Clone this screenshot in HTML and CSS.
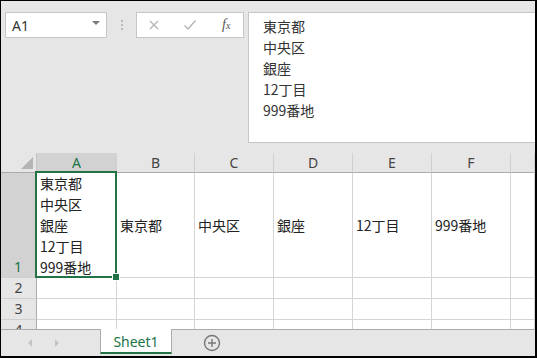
FILE: index.html
```html
<!DOCTYPE html>
<html lang="ja">
<head>
    <meta charset="UTF-8">
    <title>Sheet1</title>
    <link rel="stylesheet" href="styles.css">
</head>
<body>
    <div class="window">
        <div class="formula-bar">
            <div class="name-box">
                <span>A1</span>
                <span class="caret"></span>
            </div>
            <div class="grip"><i></i><i></i><i></i></div>
            <div class="fx-box">
                <svg class="fx-btn" width="12" height="12" viewBox="0 0 12 12">
                    <path d="M2 2 L10 10 M10 2 L2 10" stroke="#b4b4b4" stroke-width="1.3" fill="none"/>
                </svg>
                <svg class="fx-btn" width="14" height="12" viewBox="0 0 14 12">
                    <path d="M1.5 6.5 L5 10 L12.5 1.5" stroke="#b4b4b4" stroke-width="1.4" fill="none"/>
                </svg>
                <span class="fx-label"><i>f</i><span>x</span></span>
            </div>
            <div class="formula-input">
                東京都<br>中央区<br>銀座<br>12丁目<br>999番地
            </div>
        </div>

        <div class="sheet">
            <div class="corner"></div>
            <div class="col-head active">A</div>
            <div class="col-head">B</div>
            <div class="col-head">C</div>
            <div class="col-head">D</div>
            <div class="col-head">E</div>
            <div class="col-head">F</div>
            <div class="col-head"></div>

            <div class="row-head active tall">1</div>
            <div class="cell wrap selected">東京都<br>中央区<br>銀座<br>12丁目<br>999番地</div>
            <div class="cell middle">東京都</div>
            <div class="cell middle">中央区</div>
            <div class="cell middle">銀座</div>
            <div class="cell middle">12丁目</div>
            <div class="cell middle">999番地</div>
            <div class="cell"></div>

            <div class="row-head">2</div>
            <div class="cell"></div><div class="cell"></div><div class="cell"></div><div class="cell"></div>
            <div class="cell"></div><div class="cell"></div><div class="cell"></div>

            <div class="row-head">3</div>
            <div class="cell"></div><div class="cell"></div><div class="cell"></div><div class="cell"></div>
            <div class="cell"></div><div class="cell"></div><div class="cell"></div>

            <div class="row-head">4</div>
            <div class="cell"></div><div class="cell"></div><div class="cell"></div><div class="cell"></div>
            <div class="cell"></div><div class="cell"></div><div class="cell"></div>
        </div>

        <div class="tabs">
            <div class="nav">
                <span class="arrow left"></span>
                <span class="arrow right"></span>
            </div>
            <div class="tab">Sheet1</div>
            <svg class="add" width="18" height="18" viewBox="0 0 18 18">
                <circle cx="9" cy="9" r="7.5" stroke="#777" stroke-width="1.4" fill="none"/>
                <path d="M9 5 V13 M5 9 H13" stroke="#777" stroke-width="1.4"/>
            </svg>
        </div>
    </div>
</body>
</html>
```

FILE: styles.css
```css
* {
    margin: 0;
    padding: 0;
    box-sizing: border-box;
}
body {
    font-family: "Noto Sans", "Noto Sans CJK JP", sans-serif;
    font-size: 14px;
    color: #222;
    background: #fff;
}
.window {
    width: 537px;
    height: 358px;
    border: 1px solid #000;
    border-right-width: 2px;
    border-bottom-width: 2px;
    display: flex;
    flex-direction: column;
    overflow: hidden;
    background: #e6e6e6;
}

/* formula bar */
.formula-bar {
    height: 152px;
    flex: none;
    display: flex;
    align-items: flex-start;
    padding: 11px 0 0 4px;
}
.name-box {
    width: 102px;
    height: 26px;
    background: #fff;
    border: 1px solid #c6c6c6;
    display: flex;
    align-items: center;
    justify-content: space-between;
    padding: 0 6px 0 6px;
    color: #333;
}
.caret {
    width: 0;
    height: 0;
    border-left: 4px solid transparent;
    border-right: 4px solid transparent;
    border-top: 4px solid #7a7a7a;
    margin-top: -4px;
}
.grip {
    width: 29px;
    height: 26px;
    display: flex;
    flex-direction: column;
    align-items: center;
    justify-content: center;
    gap: 2px;
}
.grip i {
    width: 2px;
    height: 2px;
    background: #b8b8b8;
}
.fx-box {
    width: 108px;
    height: 26px;
    background: #fff;
    border: 1px solid #c6c6c6;
    display: flex;
    align-items: center;
    padding-left: 11px;
}
.fx-btn {
    margin-right: 23px;
}
.fx-btn + .fx-btn {
    margin-right: 25px;
}
.fx-label {
    font-family: "Liberation Serif", serif;
    color: #555;
    font-size: 14px;
}
.fx-label i {
    font-style: italic;
}
.fx-label span {
    font-style: italic;
    font-size: 10px;
}
.formula-input {
    flex: 1;
    height: 131px;
    margin-left: 4px;
    background: #fff;
    border: 1px solid #c6c6c6;
    border-right: none;
    padding: 3px 0 0 14px;
    line-height: 21px;
    color: #333;
    font-family: "Noto Sans CJK JP", sans-serif;
}

/* grid */
.sheet {
    flex: 1;
    display: grid;
    grid-template-columns: 36px 80px 78px 79px 79px 79px 79px 1fr;
    grid-template-rows: 20px 105px 21px 21px 21px;
    overflow: hidden;
    background: #fff;
}
.corner {
    background: #e6e6e6;
    border-right: 1px solid #c6c6c6;
    border-bottom: 1px solid #ababab;
    position: relative;
}
.corner::after {
    content: "";
    position: absolute;
    right: 3px;
    bottom: 3px;
    border-left: 12px solid transparent;
    border-bottom: 12px solid #b4b4b4;
}
.col-head {
    background: #e6e6e6;
    border-right: 1px solid #cfcfcf;
    border-bottom: 1px solid #ababab;
    text-align: center;
    line-height: 19px;
    color: #444;
}
.col-head.active {
    background: #d2d2d2;
    color: #217346;
    border-bottom: 2px solid #217346;
}
.row-head {
    background: #e6e6e6;
    border-right: 1px solid #ababab;
    border-bottom: 1px solid #cfcfcf;
    text-align: center;
    line-height: 20px;
    color: #444;
}
.row-head.tall {
    display: flex;
    align-items: flex-end;
    justify-content: center;
}
.row-head.active {
    background: #d2d2d2;
    color: #217346;
    border-right: 2px solid #217346;
}
.cell {
    border-right: 1px solid #d4d4d4;
    border-bottom: 1px solid #d4d4d4;
    padding-left: 3px;
    white-space: nowrap;
    font-family: "Noto Sans CJK JP", sans-serif;
    color: #222;
}
.cell.middle {
    display: flex;
    align-items: center;
}
.cell.wrap {
    line-height: 21px;
}
.cell.selected {
    position: relative;
}
.cell.selected::before {
    content: "";
    position: absolute;
    left: -2px;
    top: -2px;
    right: -1px;
    bottom: -1px;
    border: 2px solid #217346;
}
.cell.selected::after {
    content: "";
    position: absolute;
    right: -4px;
    bottom: -4px;
    width: 6px;
    height: 6px;
    background: #217346;
    border: 1px solid #fff;
}

/* sheet tabs */
.tabs {
    height: 27px;
    flex: none;
    border-top: 1px solid #ababab;
    display: flex;
    align-items: stretch;
    background: #e6e6e6;
}
.nav {
    width: 99px;
    display: flex;
    align-items: center;
    padding-left: 27px;
    gap: 23px;
}
.arrow {
    width: 0;
    height: 0;
    border-top: 4px solid transparent;
    border-bottom: 4px solid transparent;
}
.arrow.left {
    border-right: 4px solid #c4c4c4;
}
.arrow.right {
    border-left: 4px solid #c4c4c4;
}
.tab {
    width: 72px;
    margin-top: -1px;
    background: #fff;
    border-left: 1px solid #ababab;
    border-right: 1px solid #ababab;
    border-bottom: 2px solid #217346;
    color: #217346;
    text-align: center;
    line-height: 25px;
    margin-bottom: 2px;
}
.add {
    margin: 4px 0 0 31px;
}
```
